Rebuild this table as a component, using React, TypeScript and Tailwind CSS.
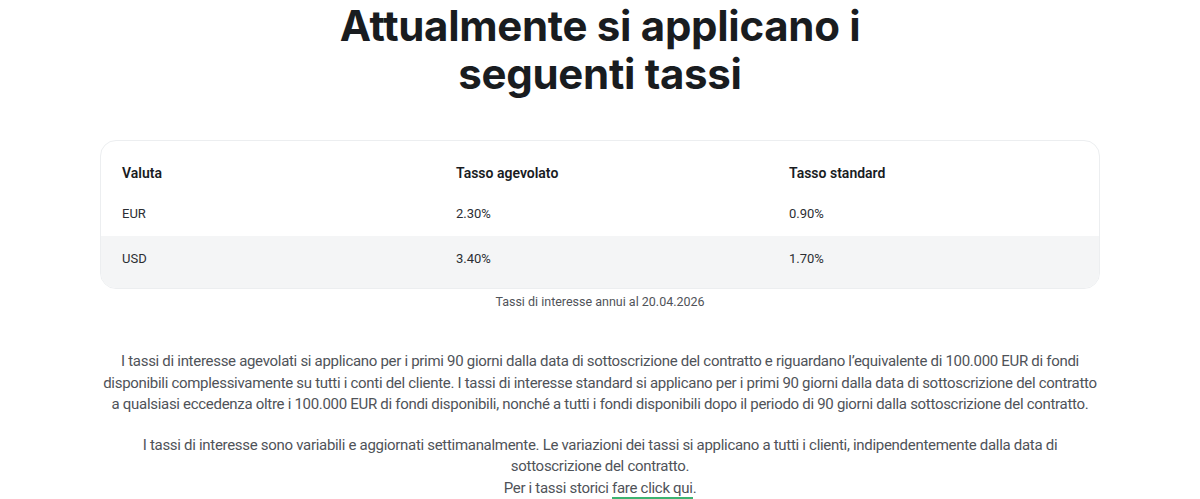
import React from "react";

type Rate = { currency: string; promo: string; standard: string };

const rates: Rate[] = [
  { currency: "EUR", promo: "2.30%", standard: "0.90%" },
  { currency: "USD", promo: "3.40%", standard: "1.70%" },
];

const cols = "grid grid-cols-[334px_333px_1fr] px-[21px]";

function RatesTable() {
  return (
    <div className="mx-[100px] mt-[42px] overflow-hidden rounded-[16px] border border-[#eceef0] bg-white">
      <div className={cols + " pt-[22px] text-[14px] leading-[20px] font-semibold text-[#191c1f]"}>
        <div>Valuta</div>
        <div>Tasso agevolato</div>
        <div>Tasso standard</div>
      </div>
      {rates.map((r, i) => (
        <div
          key={r.currency}
          className={
            cols +
            " text-[13px] leading-[20px] text-[#2b2e33] " +
            (i % 2 === 1 ? "h-[52px] bg-[#f4f5f6] pt-[13px]" : "h-[53px] pt-[21px]")
          }
        >
          <div>{r.currency}</div>
          <div>{r.promo}</div>
          <div>{r.standard}</div>
        </div>
      ))}
    </div>
  );
}

export default function App() {
  return (
    <div className="min-h-[499px] bg-white font-['Roboto',sans-serif]">
      <h1 className="mx-auto w-[600px] pt-[2px] text-center font-['Inter',sans-serif] text-[42px] font-bold leading-[48px] tracking-[-0.3px] text-[#191c1f]">
        Attualmente si applicano i seguenti tassi
      </h1>
      <RatesTable />
      <p className="mt-[3px] text-center text-[12.5px] leading-[20px] text-[#4f5359]">
        Tassi di interesse annui al 20.04.2026
      </p>
      <div className="mx-[100px] mt-[39px] text-center text-[15px] leading-[21.5px] tracking-[-0.3px] text-[#4f5359]">
        <p>
          I tassi di interesse agevolati si applicano per i primi 90 giorni dalla data di sottoscrizione del
          contratto e riguardano l’equivalente di 100.000 EUR di fondi disponibili complessivamente su tutti i
          conti del cliente. I tassi di interesse standard si applicano per i primi 90 giorni dalla data di
          sottoscrizione del contratto a qualsiasi eccedenza oltre i 100.000 EUR di fondi disponibili, nonché a
          tutti i fondi disponibili dopo il periodo di 90 giorni dalla sottoscrizione del contratto.
        </p>
        <p className="mt-[19px]">
          I tassi di interesse sono variabili e aggiornati settimanalmente. Le variazioni dei tassi si applicano a
          tutti i clienti, indipendentemente dalla data di sottoscrizione del contratto.
          <br />
          Per i tassi storici{" "}
          <a href="#" className="border-b-2 border-[#3cb371]">
            fare click qui
          </a>
          .
        </p>
      </div>
    </div>
  );
}
